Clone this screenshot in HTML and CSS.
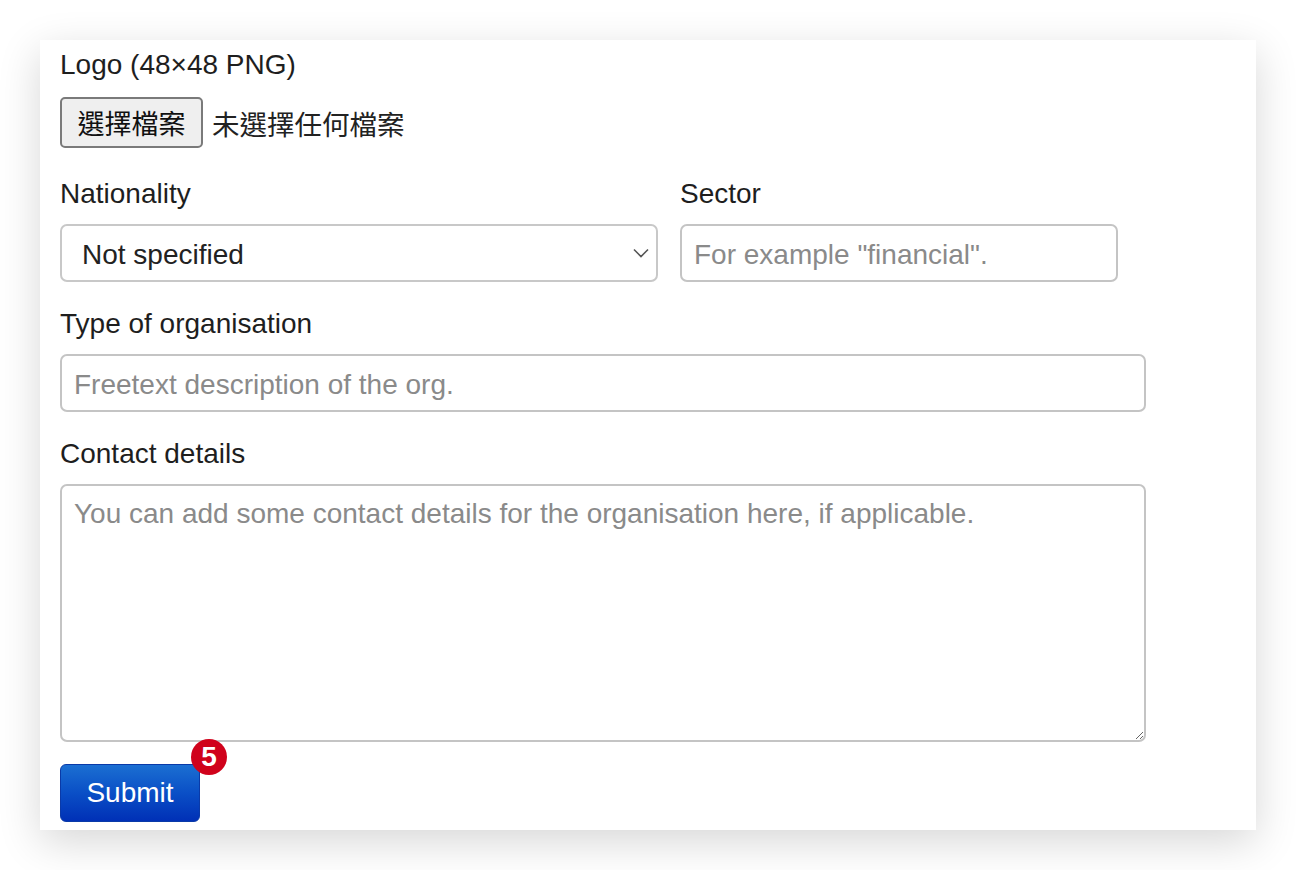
FILE: index.html
```html
<!DOCTYPE html>
<html lang="en">
<head>
<meta charset="utf-8">
<title>Organisation form</title>
<link rel="stylesheet" href="styles.css">
</head>
<body>
<form class="card">
  <div class="field field-logo">
    <label class="label">Logo (48×48 PNG)</label>
    <div class="file-row">
      <span class="file-btn">選擇檔案</span>
      <span class="file-name">未選擇任何檔案</span>
    </div>
  </div>

  <div class="field-row">
    <div class="field">
      <label class="label">Nationality</label>
      <div class="select">
        <span class="select-text">Not specified</span>
        <svg class="chevron" width="16" height="10" viewBox="0 0 16 10"><path d="M1 1.5 L8 8.5 L15 1.5" fill="none" stroke="#555" stroke-width="1.6"/></svg>
      </div>
    </div>
    <div class="field">
      <label class="label">Sector</label>
      <input class="input" type="text" placeholder="For example &quot;financial&quot;.">
    </div>
  </div>

  <div class="field">
    <label class="label">Type of organisation</label>
    <input class="input input-wide" type="text" placeholder="Freetext description of the org.">
  </div>

  <div class="field">
    <label class="label">Contact details</label>
    <textarea class="textarea" placeholder="You can add some contact details for the organisation here, if applicable."></textarea>
  </div>

  <div class="submit-wrap">
    <button class="submit" type="button">Submit</button>
    <span class="badge">5</span>
  </div>
</form>
</body>
</html>
```

FILE: styles.css
```css
html, body {
  margin: 0;
  padding: 0;
  background: #ffffff;
}

body {
  padding: 40px 40px 40px 40px;
  font-family: "Liberation Sans", Arial, "Noto Sans CJK TC", sans-serif;
  font-size: 28px;
  color: #222222;
}

.card {
  width: 1216px;
  height: 790px;
  box-sizing: border-box;
  background: #ffffff;
  padding: 5px 20px 8px 20px;
  box-shadow: 0 12px 40px rgba(0, 0, 0, 0.16);
}

.field {
  display: flex;
  flex-direction: column;
  margin-bottom: 22px;
}

.field-logo {
  margin-bottom: 26px;
}

.label {
  display: block;
  line-height: 40px;
  height: 40px;
  margin-bottom: 10px;
  color: #1e1e1e;
}

.field-logo .label {
  margin-bottom: 12px;
}

.file-row {
  display: flex;
  align-items: center;
  height: 51px;
}

.file-btn {
  box-sizing: border-box;
  height: 51px;
  width: 143px;
  display: flex;
  align-items: center;
  justify-content: center;
  background: #efefef;
  border: 2px solid #7a7a7a;
  border-radius: 5px;
  font-family: "Noto Sans CJK TC", sans-serif;
  font-size: 27px;
  color: #111111;
}

.file-name {
  margin-left: 9px;
  font-family: "Noto Sans CJK TC", sans-serif;
  font-size: 27.5px;
  color: #222222;
}

.field-row {
  display: grid;
  grid-template-columns: 598px 438px;
  column-gap: 22px;
}

.select {
  box-sizing: border-box;
  height: 58px;
  border: 2px solid #c8c8c8;
  border-radius: 7px;
  display: flex;
  align-items: center;
  justify-content: space-between;
  padding: 3px 7px 0 20px;
}

.select-text {
  color: #222222;
}

.chevron {
  display: block;
  margin-top: -3px;
}

.input {
  box-sizing: border-box;
  height: 58px;
  border: 2px solid #c4c4c4;
  border-radius: 7px;
  padding: 3px 12px 0 12px;
  font-family: inherit;
  font-size: 28px;
  color: #222222;
  outline: none;
  background: #ffffff;
}

.input-wide {
  width: 1086px;
}

.input::placeholder,
.textarea::placeholder {
  color: #8a8a8a;
}

.textarea {
  box-sizing: border-box;
  width: 1086px;
  height: 258px;
  border: 2px solid #c4c4c4;
  border-radius: 7px;
  padding: 12px 12px;
  font-family: inherit;
  font-size: 28px;
  line-height: 32px;
  color: #222222;
  outline: none;
  resize: both;
  background: #ffffff;
}

.submit-wrap {
  position: relative;
  width: 140px;
  height: 58px;
}

.submit {
  box-sizing: border-box;
  width: 140px;
  height: 58px;
  border: 1px solid #0a3aa8;
  border-radius: 6px;
  background: linear-gradient(to bottom, #1b6fd2 0%, #0a4fc6 50%, #0030b6 100%);
  color: #ffffff;
  font-family: inherit;
  font-size: 28px;
  padding: 0;
}

.badge {
  position: absolute;
  left: 131px;
  top: -25px;
  width: 36px;
  height: 36px;
  border-radius: 50%;
  background: #d0021b;
  color: #ffffff;
  font-size: 28px;
  font-weight: bold;
  line-height: 36px;
  text-align: center;
}
```
